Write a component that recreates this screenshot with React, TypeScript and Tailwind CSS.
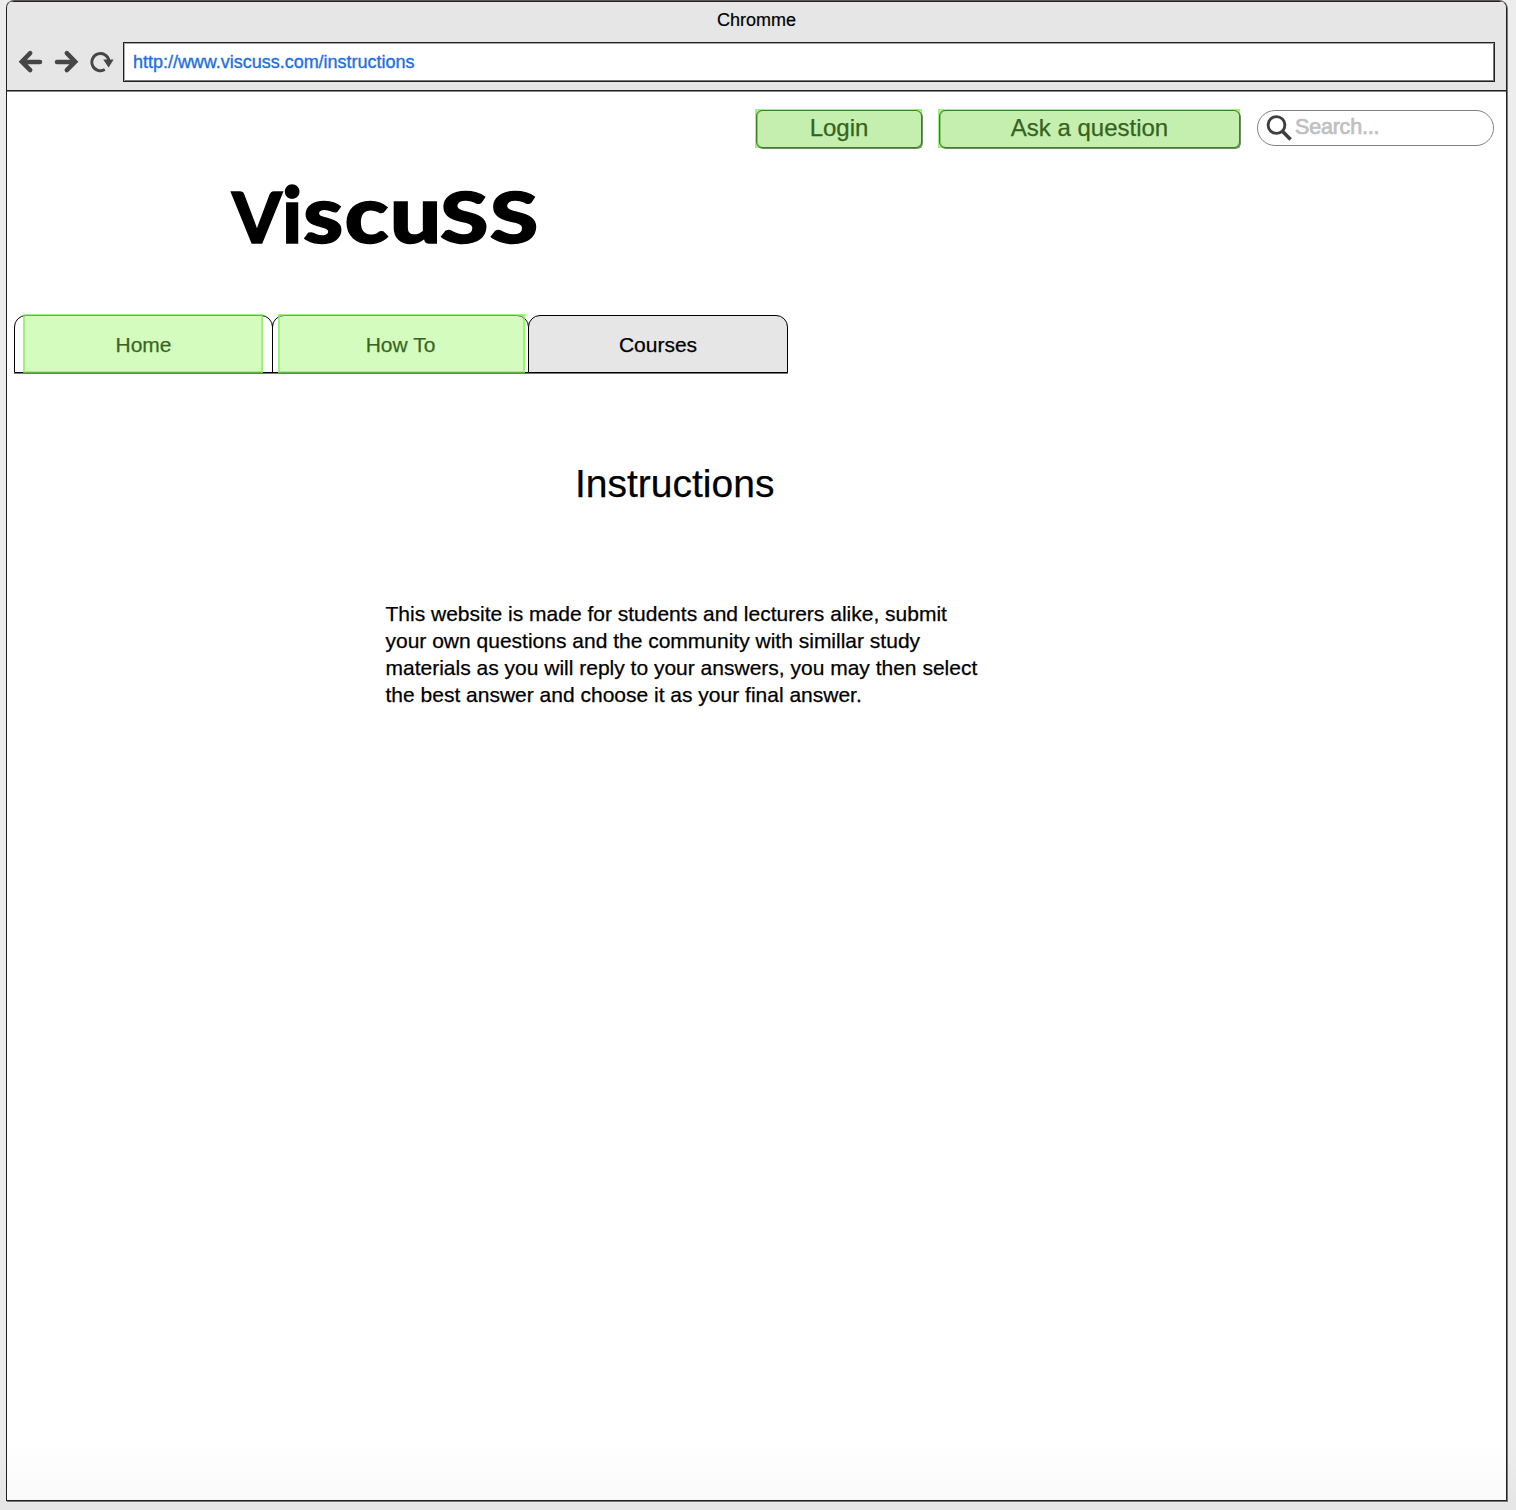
import React from "react";

function BackArrow() {
  return (
    <svg width="25" height="24" viewBox="0 0 25 24" fill="none" stroke="#464646" strokeWidth="4.5" strokeLinecap="round">
      <path d="M22 12H5M12.2 3.2L3.8 11.7L12.2 20.2" />
    </svg>
  );
}

function ForwardArrow() {
  return (
    <svg width="25" height="24" viewBox="0 0 25 24" fill="none" stroke="#464646" strokeWidth="4.5" strokeLinecap="round">
      <path d="M3 12H20M12.8 3.2L21.2 11.7L12.8 20.2" />
    </svg>
  );
}

function Reload() {
  return (
    <svg width="24" height="24" viewBox="0 0 24 24">
      <path d="M14.8 19.6A8.6 8.6 0 1 1 18.9 10.5" fill="none" stroke="#464646" strokeWidth="2.9" />
      <path d="M13.2 9.5H23.6L18.6 17.5Z" fill="#464646" />
    </svg>
  );
}

function SearchIcon() {
  return (
    <svg width="28" height="28" viewBox="0 0 28 28" fill="none" stroke="#3f3f3f">
      <circle cx="11.5" cy="11" r="8.4" strokeWidth="2.9" />
      <path d="M17.2 17L25.6 25.4" strokeWidth="3.6" />
    </svg>
  );
}

function ActionButton({ label, className }: { label: string; className: string }) {
  return (
    <button className={"flex h-[39px] bg-[#a0f27a] " + className}>
      <span className="mt-px ml-px flex h-[38px] flex-1 items-center justify-center rounded-[6px] border border-[#3d8021] bg-[#c5efae] text-[24px] leading-none text-[#366220] shadow-[1px_1px_0_#718b65,inset_1px_0_0_#8cc36f] [-webkit-text-stroke:0.25px_#366220]">
        <span className="-translate-y-px">{label}</span>
      </span>
    </button>
  );
}

function Tab({ label, overlay, className }: { label: string; overlay?: string; className: string }) {
  return (
    <div className={"relative flex h-[58px] items-center justify-center rounded-t-[12px] border border-black pt-[2px] text-[21px] shadow-[0_1px_0_#777] [-webkit-text-stroke:0.25px_currentColor] " + className}>
      <span>{label}</span>
      {overlay && <div className={"absolute -top-[2px] -bottom-px border-2 border-[#78ee4d]/60 bg-[#90f85d]/40 " + overlay} />}
    </div>
  );
}

export default function App() {
  return (
    <div className="h-[1510px] w-[1516px] bg-[linear-gradient(#ededed_0,#ededed_1440px,#e5e5e5_1510px)] pl-[6px] font-['Liberation_Sans',Arial,sans-serif] text-black">
      <div className="flex h-[1501px] w-[1501px] flex-col overflow-hidden rounded-t-[8px] border border-[#231f20] border-t-[#5c5859] bg-[linear-gradient(#fff_0,#fff_1440px,#fafafa_1501px)] shadow-[1px_1px_0_#777]">
        <header className="h-[90px] shrink-0 border-t border-b border-[#231f20] bg-[#e6e6e6] shadow-[0_1px_0_#888]">
          <div className="flex h-[40px] items-center justify-center pb-[4px] text-[18px] leading-none [-webkit-text-stroke:0.2px_black]">Chromme</div>
          <div className="flex items-center pl-[11px]">
            <BackArrow />
            <span className="ml-[11px] flex"><ForwardArrow /></span>
            <span className="ml-[11px] flex"><Reload /></span>
            <div className="ml-[9px] flex h-[40px] w-[1372px] items-center border border-[#231f20] bg-white pl-[9px] text-[18px] leading-none tracking-[-0.02px] text-[#1d6fe0] shadow-[inset_1px_1px_0_#aaa,inset_-1px_-1px_0_#777] [-webkit-text-stroke:0.35px_#1d6fe0]">
              http://www.viscuss.com/instructions
            </div>
          </div>
        </header>

        <div className="mt-[18px] flex h-[40px] shrink-0 items-start pl-[748px]">
          <ActionButton label="Login" className="w-[167px]" />
          <ActionButton label="Ask a question" className="ml-[16px] w-[302px]" />
          <div className="mt-px ml-[17px] flex h-[36px] w-[237px] items-center rounded-full border-[1.5px] border-[#808080] bg-white pl-[7px] text-[21.5px] leading-none text-[#c0c0c0] [-webkit-text-stroke:0.7px_#c0c0c0]">
            <SearchIcon />
            <span className="ml-[2px] tracking-[-0.2px]">Search...</span>
          </div>
        </div>

        <h1 className="mt-[24px] ml-[225px] flex h-[78px] shrink-0 items-baseline font-['Lato',sans-serif] text-[71px] leading-[78px] font-black [-webkit-text-stroke:1.4px_black]">
          <span className="w-[50px]">V</span>
          <span className="w-[21px] text-[78px]">i</span>
          <span className="w-[137px] origin-left scale-x-[1.14] text-[80px] tracking-[1px]">scu</span>
          <span className="origin-left scale-x-[1.24] tracking-[1px]">SS</span>
        </h1>

        <nav className="mt-[64px] ml-[7px] flex shrink-0">
          <Tab label="Home" overlay="left-[8px] right-[9px]" className="w-[259px]" />
          <Tab label="How To" overlay="left-[5px] right-[3px]" className="-ml-px w-[257px]" />
          <Tab label="Courses" className="-ml-px w-[260px] bg-[#e6e6e6]" />
        </nav>

        <main className="[-webkit-text-stroke:0.25px_black]">
          <h2 className="mt-[88px] ml-[568px] text-[39px] leading-[46px]">Instructions</h2>
          <p className="mt-[93px] ml-[378.5px] text-[21px] leading-[27px] whitespace-nowrap">
            This website is made for students and lecturers alike, submit<br />
            your own questions and the community with simillar study<br />
            materials as you will reply to your answers, you may then select<br />
            the best answer and choose it as your final answer.
          </p>
        </main>
      </div>
    </div>
  );
}
